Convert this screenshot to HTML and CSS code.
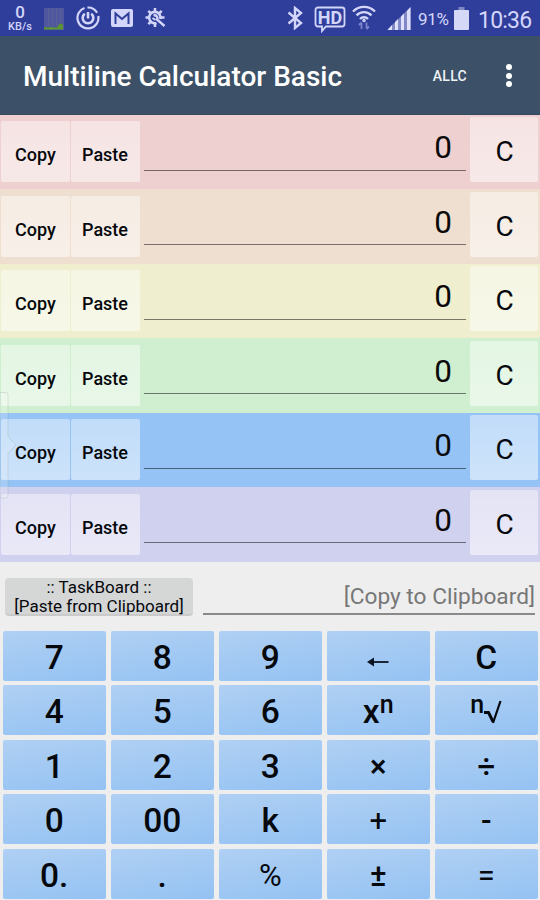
FILE: index.html
```html
<!DOCTYPE html>
<html lang="en">

<head>
    <meta charset="UTF-8">
    <meta name="viewport" content="width=device-width, initial-scale=1.0">
    <title>Multiline Calculator Basic</title>
    <link rel="stylesheet" href="styles.css">
</head>

<body>
    <div class="app">
        <div class="status-bar">
            <div class="net-speed">
                <span class="net-value">0</span>
                <span class="net-unit">KB/s</span>
            </div>
            <svg class="icon-graph" width="20" height="22" viewBox="0 0 20 22">
                <rect width="20" height="22" fill="#51579d" />
                <path d="M4.500 0v18M8.500 0v18M12.500 0v18M16.500 0v18" stroke="#5b609a" />
                <path d="M0 21.500V19l4 .5 3-.5 3 .5h3l1-2 2-2 3 1v5z" fill="#5b9433" />
            </svg>
            <svg class="icon-sync" width="24" height="24" viewBox="0 0 24 24" fill="none" stroke="#d3d6fa">
                <path d="M8.500 2A10.500 10.500 0 1 0 22.300 10" stroke-width="2.200" />
                <path d="M11.500 1.500a10.500 10.500 0 0 1 9.600 5.200" stroke-width="2.200" />
                <path d="M8.800 7.800a5.300 5.300 0 1 0 6.400 0" stroke-width="2.600" />
                <path d="M12 6v6.500" stroke-width="2.600" />
            </svg>
            <svg class="icon-mail" width="22" height="18" viewBox="0 0 22 18">
                <rect width="22" height="18" rx="2" fill="#d3d6fa" />
                <path d="M4.500 15V4.500L11 10l6.500-5.500V15" fill="none" stroke="#303e9b" stroke-width="2" />
            </svg>
            <svg class="icon-gear" width="22" height="22" viewBox="0 0 22 22" fill="none" stroke="#d3d6fa">
                <path d="M15.300 12A5.700 5.700 0 1 0 11.500 16" stroke-width="2.600" />
                <path d="M10 1v4M10 16v4M.5 10.500h4M15.500 10.500h4M3.300 3.800l2.700 2.700M14 6.500l2.700-2.700M3.300 17.200l2.700-2.700" stroke-width="2.500" />
                <path d="M8.500 8.500a2.800 2.800 0 0 1 3.500 4L19.500 19" stroke-width="2.400" />
                <path d="M7.500 11l3 2" stroke-width="2" />
            </svg>
            <svg class="icon-bluetooth" width="16" height="24" viewBox="0 0 16 24" fill="none" stroke="#d3d6fa" stroke-width="2.400">
                <path d="M1.500 6.500L14 17l-6 5V2l6 5L1.500 17.500" />
            </svg>
            <div class="hd">
                <svg width="32" height="27" viewBox="0 0 32 27" fill="none" stroke="#d3d6fa" stroke-width="1.800">
                    <path d="M4 1.500h24a2.500 2.500 0 0 1 2.500 2.500v14a2.500 2.500 0 0 1-2.500 2.500H12L8 25v-4.500H4A2.500 2.500 0 0 1 1.500 18V4A2.500 2.500 0 0 1 4 1.500z" />
                </svg>
                <span class="hd-text">HD</span>
            </div>
            <svg class="icon-wifi" width="24" height="26" viewBox="0 0 24 26" fill="none" stroke="#d3d6fa" stroke-width="2.400">
                <path d="M1 6.500a15.500 15.500 0 0 1 22 0M4.500 10.300a10.500 10.500 0 0 1 15 0M8 14a5.600 5.600 0 0 1 8 0" />
                <circle cx="12" cy="15.500" r="1" stroke-width="1.500" />
                <path d="M9.500 24v-6M7 20l2.500-2.500M14.500 17.500v6M17 21.500L14.500 24" stroke="#7c84cc" stroke-width="1.800" />
            </svg>
            <svg class="icon-signal" width="24" height="23" viewBox="0 0 24 23">
                <path d="M0 23L23.500 0v23z" fill="#8188c6" />
                <path d="M1 22.500L5 18v5H1zM8 15l3-3v11H8zM14 9.500l3-3V23h-3zM20 4l3.500-4v23H20z" fill="#dfe1fc" />
            </svg>
            <span class="battery-text">91%</span>
            <svg class="icon-battery" width="15" height="23" viewBox="0 0 15 23">
                <rect x="4.500" width="6" height="3" fill="#8188c6" />
                <rect y="3" width="15" height="20" rx="1" fill="#d6d8f8" />
            </svg>
            <span class="clock">10:36</span>
        </div>

        <div class="toolbar">
            <h1 class="title">Multiline Calculator Basic</h1>
            <button class="allc">ALLC</button>
            <div class="menu">
                <span class="dot"></span>
                <span class="dot"></span>
                <span class="dot"></span>
            </div>
        </div>

        <div class="lines">
            <div class="line red">
                <button class="small-btn">Copy</button>
                <button class="small-btn">Paste</button>
                <div class="value">0</div>
                <button class="clear-btn">C</button>
            </div>
            <div class="line orange">
                <button class="small-btn">Copy</button>
                <button class="small-btn">Paste</button>
                <div class="value">0</div>
                <button class="clear-btn">C</button>
            </div>
            <div class="line yellow">
                <button class="small-btn">Copy</button>
                <button class="small-btn">Paste</button>
                <div class="value">0</div>
                <button class="clear-btn">C</button>
            </div>
            <div class="line green">
                <button class="small-btn">Copy</button>
                <button class="small-btn">Paste</button>
                <div class="value">0</div>
                <button class="clear-btn">C</button>
            </div>
            <div class="line blue">
                <button class="small-btn">Copy</button>
                <button class="small-btn">Paste</button>
                <div class="value">0</div>
                <button class="clear-btn">C</button>
            </div>
            <div class="line purple">
                <button class="small-btn">Copy</button>
                <button class="small-btn">Paste</button>
                <div class="value">0</div>
                <button class="clear-btn">C</button>
            </div>

            <!-- edge panel handle -->
            <svg class="edge-handle" width="18" height="110" viewBox="0 0 18 110">
                <path d="M0 1.500h6a2 2 0 0 1 2 2V46l8 8-8 8v43a2 2 0 0 1-2 2H0z" fill="#ffffff" fill-opacity="0.15" stroke="#90a0a0" stroke-opacity="0.25" />
            </svg>
        </div>

        <div class="taskboard">
            <button class="paste-board">:: TaskBoard ::<br>[Paste from Clipboard]</button>
            <div class="copy-board">[Copy to Clipboard]</div>
        </div>

        <div class="keypad">
            <button class="key">7</button>
            <button class="key">8</button>
            <button class="key">9</button>
            <button class="key">
                <svg class="arrow" width="22" height="10" viewBox="0 0 22 10">
                    <path d="M0 5l7-4.500v9z" fill="#0b1420" />
                    <path d="M6 5h15.500" stroke="#0b1420" stroke-width="1.800" />
                </svg>
            </button>
            <button class="key">C</button>

            <button class="key">4</button>
            <button class="key">5</button>
            <button class="key">6</button>
            <button class="key"><span class="power">x<span class="sup">n</span></span></button>
            <button class="key"><span class="root"><span class="sup">n</span><svg width="18" height="24" viewBox="0 0 18 24" fill="none" stroke="#05080c">
                <path d="M0 12.500h4.500l4.500 9" stroke-width="3" />
                <path d="M9 23L16.500 1" stroke-width="2.200" />
            </svg></span></button>

            <button class="key">1</button>
            <button class="key">2</button>
            <button class="key">3</button>
            <button class="key operator">×</button>
            <button class="key operator">÷</button>

            <button class="key">0</button>
            <button class="key">00</button>
            <button class="key">k</button>
            <button class="key operator light">+</button>
            <button class="key operator">-</button>

            <button class="key">0.</button>
            <button class="key">.</button>
            <button class="key operator light">%</button>
            <button class="key operator">±</button>
            <button class="key operator light">=</button>
        </div>
    </div>
</body>

</html>
```

FILE: styles.css
```css
* {
    box-sizing: border-box;
}

body {
    margin: 0;
    background-color: #eeeeee;
    font-family: Roboto, sans-serif;
}

button {
    padding: 0;
    border: none;
    color: #05080c;
    font-family: inherit;
    cursor: pointer;
}

.app {
    display: flex;
    flex-direction: column;
    width: 540px;
    height: 900px;
    overflow: hidden;
}

/* status bar */
.status-bar {
    display: flex;
    align-items: flex-start;
    height: 36px;
    padding-left: 7px;
    background-color: #303e9b;
    color: #d3d6fa;
}

.net-speed {
    display: flex;
    flex-direction: column;
    align-items: center;
    width: 26px;
    margin-top: 4px;
}

.net-value {
    font-size: 17px;
    line-height: 17px;
    font-weight: 500;
}

.net-unit {
    font-size: 11px;
    line-height: 11px;
    font-weight: 500;
}

.icon-graph {
    margin: 8px 0 0 11px;
}

.icon-sync {
    margin: 6px 0 0 12px;
}

.icon-mail {
    margin: 9px 0 0 11px;
}

.icon-gear {
    margin: 7px 0 0 12px;
}

.icon-bluetooth {
    margin: 6px 0 0 120px;
}

.hd {
    display: grid;
    margin: 6px 0 0 11px;
}

.hd svg,
.hd-text {
    grid-area: 1 / 1;
}

.hd-text {
    text-align: center;
    font-size: 18px;
    line-height: 24px;
    font-weight: 700;
}

.icon-wifi {
    margin: 5px 0 0 6px;
}

.icon-signal {
    margin: 7px 0 0 11px;
}

.battery-text {
    width: 32px;
    margin: 8px 0 0 7px;
    font-size: 17px;
    line-height: 22px;
    letter-spacing: -0.3px;
}

.icon-battery {
    margin: 7px 0 0 4px;
}

.clock {
    margin: 7px 0 0 9px;
    font-size: 23px;
    line-height: 27px;
    letter-spacing: -0.8px;
}

/* toolbar */
.toolbar {
    display: flex;
    align-items: center;
    height: 78.500px;
    padding: 2px 28px 0 23px;
    background-color: #3c5168;
    border-bottom: 1px solid #34485e;
    color: #ffffff;
}

.title {
    flex: 1;
    margin: 0;
    padding-top: 1px;
    font-size: 28px;
    font-weight: 500;
    white-space: nowrap;
}

.allc {
    background: none;
    color: #f0f3f6;
    font-size: 14px;
    font-weight: 500;
    letter-spacing: 0.3px;
}

.menu {
    display: flex;
    flex-direction: column;
    gap: 2.500px;
    margin-left: 39px;
}

.dot {
    width: 6px;
    height: 6px;
    border-radius: 50%;
    background-color: #ffffff;
}

/* calculator lines */
.lines {
    position: relative;
}

.line {
    display: flex;
    align-items: flex-start;
    height: 74.500px;
    padding: 2.500px 2px 0 1px;
}

.small-btn {
    width: 69px;
    height: 61px;
    margin: 4px 0.500px 0 0;
    padding: 6px 0 0 0;
    border-radius: 2px;
    background: linear-gradient(rgba(255, 255, 255, 0.42), rgba(255, 255, 255, 0.52));
    font-size: 18px;
    font-weight: 500;
}

.value {
    flex: 1;
    height: 53.500px;
    margin: 0 4px 0 3.500px;
    padding: 12px 14px 0 0;
    border-bottom: 1.500px solid rgba(0, 0, 0, 0.5);
    color: #0a0a0a;
    font-size: 31.500px;
    line-height: 37px;
    text-align: right;
}

.clear-btn {
    width: 68px;
    height: 65px;
    padding: 4px 0 0 1px;
    border-radius: 2px;
    background: linear-gradient(rgba(255, 255, 255, 0.42), rgba(255, 255, 255, 0.54));
    font-size: 28px;
}

.red {
    background-color: #efd0d0;
}

.orange {
    background-color: #efdfd0;
}

.yellow {
    background-color: #efefd0;
}

.green {
    background-color: #d0efd0;
}

.blue {
    background-color: #95c3f5;
}

.purple {
    background-color: #d0d0ef;
}

.edge-handle {
    position: absolute;
    left: 0;
    top: 276px;
}

/* taskboard */
.taskboard {
    display: flex;
    align-items: flex-start;
    height: 69px;
    padding: 16px 5px 0 5px;
}

.paste-board {
    width: 188px;
    height: 38px;
    padding-bottom: 1px;
    border-radius: 4px;
    background-color: #d5d6d6;
    border-bottom: 2px solid #cacaca;
    font-size: 17px;
    line-height: 19.500px;
}

.copy-board {
    flex: 1;
    height: 37px;
    margin-left: 10px;
    padding-top: 6px;
    border-bottom: 2px solid #8a8a8a;
    color: #777777;
    font-size: 22.700px;
    line-height: 26px;
    text-align: right;
    white-space: nowrap;
}

/* keypad */
.keypad {
    flex: 1;
    display: grid;
    grid-template-columns: repeat(5, 1fr);
    grid-template-rows: repeat(5, 1fr);
    gap: 4.500px;
    padding: 0.500px 2px 1.500px 2.500px;
}

.key {
    display: flex;
    align-items: center;
    justify-content: center;
    padding-top: 3px;
    border-radius: 2px;
    background: linear-gradient(170deg, #b0d0f3, #94c2f3);
    font-size: 33.500px;
    font-weight: 500;
}

.operator {
    font-size: 31px;
}

.light {
    font-weight: 400;
}

.arrow {
    margin-top: 9px;
}

.power,
.root {
    display: flex;
    align-items: flex-start;
    line-height: 42px;
}

.sup {
    font-size: 25px;
    line-height: 28px;
}

.root {
    margin-bottom: 6px;
}

.root .sup {
    line-height: 24px;
}

.root svg {
    margin-top: 7px;
}
```
